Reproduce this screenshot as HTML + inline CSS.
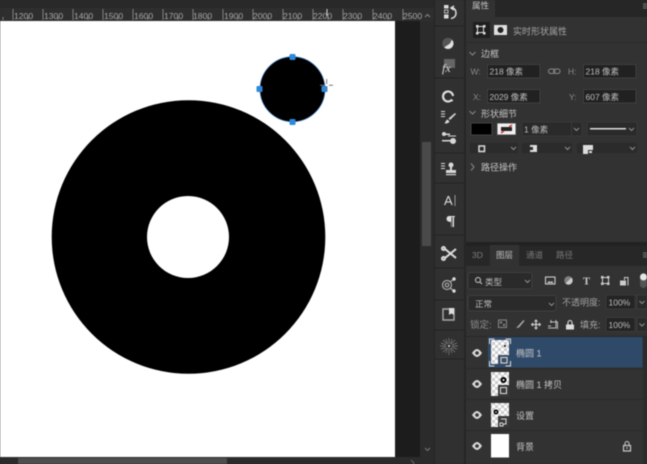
<!DOCTYPE html>
<html><head><meta charset="utf-8"><style>
html,body{margin:0;padding:0;background:#2a2a2a;width:647px;height:464px;overflow:hidden}
svg{display:block;filter:blur(.45px)}
text{font-family:"Liberation Sans","Noto Sans CJK SC",sans-serif;fill:#b4b4b4;font-size:9px}
.r{font-size:8.6px;fill:#a8a8a8}
.l{fill:#bcbcbc;font-size:8.5px}
.t{fill:#c4c4c4;font-size:9px}
.i{fill:#212121;stroke:#3f3f3f;stroke-width:1}
.d{fill:none;stroke:#8f8f8f;stroke-width:1}
.e{fill:#d8d8d8}
</style></head><body>
<svg width="647" height="464" viewBox="0 0 647 464" xmlns="http://www.w3.org/2000/svg">
<defs><pattern id="ck" width="6" height="6" patternUnits="userSpaceOnUse"><rect width="6" height="6" fill="#fff"/><rect width="3" height="3" fill="#ccc"/><rect x="3" y="3" width="3" height="3" fill="#ccc"/></pattern></defs>
<rect width="647" height="464" fill="#2a2a2a"/>
<!-- ruler -->
<rect width="435" height="21" fill="#2e2e2e"/>
<rect y="0" width="435" height="8" fill="#292929"/>
<g stroke="#808080" stroke-width="1">
<path d="M13 9V20M43 9V20M73 9V20M103 9V20M133 9V20M163 9V20M193 9V20M223 9V20M253 9V20M283 9V20M313 9V20M343 9V20M373 9V20M403 9V20"/>
<path d="M3 17V20M28 17V20M58 17V20M88 17V20M118 17V20M148 17V20M178 17V20M208 17V20M238 17V20M268 17V20M298 17V20M328 17V20M358 17V20M388 17V20"/>
<path d="M327 9V16" stroke="#ddd"/>
</g>
<text class="r" x="14" y="19">1200</text><text class="r" x="44" y="19">1300</text><text class="r" x="74" y="19">1400</text><text class="r" x="104" y="19">1500</text><text class="r" x="134" y="19">1600</text><text class="r" x="164" y="19">1700</text><text class="r" x="193" y="19">1800</text><text class="r" x="224" y="19">1900</text><text class="r" x="253" y="19">2000</text><text class="r" x="283" y="19">2100</text><text class="r" x="313" y="19">2200</text><text class="r" x="343" y="19">2300</text><text class="r" x="373" y="19">2400</text><text class="r" x="403" y="19">2500</text>
<path d="M425 17l2.500-2.500 2.500 2.500" fill="none" stroke="#888"/>
<!-- canvas -->
<rect x="0" y="21" width="395" height="436" fill="#fff"/>
<rect x="395" y="21" width="25" height="443" fill="#1c1c1c"/>
<rect x="420" y="21" width="15" height="443" fill="#2b2b2b"/>
<rect x="422" y="142" width="9" height="104" fill="#4a4a4a"/>
<path d="M425 448l2.500 2.500 2.500-2.500" fill="none" stroke="#777"/>
<rect x="0" y="457" width="420" height="7" fill="#2b2b2b"/>
<rect x="18" y="458" width="209" height="6" fill="#4e4e4e"/>
<path d="M411 460l3 3-3 3" fill="none" stroke="#666"/>
<!-- artwork -->
<circle cx="188.500" cy="237" r="136.800" fill="#000"/>
<circle cx="188" cy="237" r="41" fill="#fff"/>
<circle cx="292.500" cy="89.200" r="32.500" fill="#000"/>
<circle cx="292.500" cy="89.200" r="32.500" fill="none" stroke="#2b7fd0" stroke-width=".8" opacity=".7"/>
<g fill="#2e88dc"><rect x="289.500" y="54" width="6" height="6" rx="1"/><rect x="289.500" y="119" width="6" height="6" rx="1"/><rect x="256.500" y="86" width="6" height="6" rx="1"/><rect x="321.500" y="86" width="6" height="6" rx="1"/></g>
<path d="M326.700 79v5M326.700 87v3M320 85.300h5M329 85.300h4" stroke="#777" stroke-width="1" fill="none"/>
<!-- dock -->
<rect x="435" y="0" width="30" height="464" fill="#303030"/>
<rect x="434" y="0" width="1" height="464" fill="#232323"/>
<rect x="464" y="0" width="2" height="464" fill="#262626"/>
<g stroke="#242424"><path d="M435 26H464M435 78H464M435 153H464M435 183H464M435 235H464M435 268H464M435 300H464M435 330H464M435 359H464"/></g>
<!-- dock icons -->
<g fill="#dcdcdc">
<rect x="444" y="5" width="4.500" height="3.500"/><rect x="444.500" y="10" width="3.500" height="3" fill="none" stroke="#ddd" stroke-width=".8"/><rect x="444" y="14.500" width="4.500" height="4"/>
</g>
<path d="M454 6l-3 2 3 2M451.500 8c3 0 4.500 2 4.500 5s-2 5-5 5.500" fill="none" stroke="#ddd" stroke-width="1.500"/>
<circle cx="448" cy="43.500" r="5.500" fill="#e2e2e2"/>
<path d="M444 47.500a5.500 5.500 0 0 1 8-8l-2 4z" fill="#555"/>
<rect x="444" y="59" width="11" height="9" fill="#666"/>
<text x="442" y="72" style="font:italic 12px 'Liberation Serif',serif;fill:#ddd">fx</text>
<path d="M452 99.500a5 5 0 1 1 1-3.500" fill="none" stroke="#ddd" stroke-width="2.200"/>
<circle cx="452" cy="100.500" r="1" fill="#ddd"/>
<g fill="#d8d8d8">
<path d="M441 111h4v1h-4zM441 113.500h4v1h-4zM441 116h4v1h-4z"/>
<path d="M455 113l1 1-6 6-1.500-1.500zM447.500 119.500l2 2c-1 2-3 2-5 2 1-1 1-3 3-4z"/>
<path d="M442 133.500h8v1.500h-8zM448 135.500h8v1h-8z"/><circle cx="444" cy="134" r="2"/>
<path d="M442 140h9v1.500h-9z"/><circle cx="453" cy="141" r="3"/>
<path d="M441 163h4v1h-4zM441 165.500h4v1h-4zM441 168h4v1h-4z"/>
<circle cx="451" cy="165" r="2.500"/><path d="M450 167h2v3h4v3h-10v-3h4z"/><rect x="446" y="174" width="10" height="1.200"/>
</g>
<text x="444" y="205" style="font-size:13px;fill:#ddd">A</text><rect x="454.500" y="195" width="1" height="11" fill="#999"/>
<path d="M449 216h6v1h-1v10h-1.500v-10h-1v10H451v-5c-3 0-4.500-1.500-4.500-3s1-3 2.500-3z" fill="#ddd"/>
<g stroke="#dcdcdc" fill="none" stroke-width="2"><path d="M445 249l11 9M445 258l11-9"/><circle cx="443.500" cy="248.500" r="1.500"/><circle cx="443.500" cy="258.500" r="1.500"/></g>
<g stroke="#aaa" fill="none" stroke-width="1.200"><circle cx="447" cy="285" r="4.500"/><circle cx="447" cy="285" r="1.800"/><path d="M454 279l-4 3M454 291l-4-3"/></g>
<circle cx="454" cy="279" r="1.700" fill="#ddd"/><circle cx="454" cy="291" r="1.700" fill="#ddd"/>
<path d="M443 309h11v11h-11z" fill="none" stroke="#aaa" stroke-width="1.400"/><path d="M449 308h5v7l-2.500-1.500L449 315z" fill="#ddd"/>
<g stroke="#808080" stroke-width=".7"><path d="M449 338v6M449 348v7M440 346h6M452 346h6M443 340l4 4M451 348l4 4M455 340l-4 4M447 348l-4 4M446 339l1.500 5M452 339l-1.500 5M446 353l1.500-5M452 353l-1.500-5M441 343l5 2M457 343l-5 2M441 349l5-2M457 349l-5-2"/></g>
<circle cx="449" cy="346" r="1" fill="#ddd"/>
<!-- properties panel -->
<rect x="466" y="0" width="181" height="242" fill="#323232"/>
<rect x="466" y="0" width="181" height="17" fill="#262626"/>
<rect x="466" y="0" width="29" height="17" fill="#323232"/>
<text x="472" y="8.500" class="t" style="font-size:8.500px">属性</text>
<path d="M643 4h4M643 6h4M643 8h4" stroke="#777"/>
<rect x="473" y="22" width="17" height="16" fill="#1f1f1f"/>
<path d="M477.500 26.500h6v6h-6z" fill="none" stroke="#ddd"/><path d="M476 25h2.500v2.500H476zM483 25h2.500v2.500H483zM476 32h2.500v2.500H476zM483 32h2.500v2.500H483z" fill="#ddd"/>
<rect x="494" y="25" width="13" height="10" fill="#e0e0e0"/><circle cx="500.500" cy="30" r="3" fill="#222"/>
<text x="513" y="34.500" style="font-size:9px;fill:#a5a5a5">实时形状属性</text>
<rect x="466" y="42" width="181" height="1" fill="#2b2b2b"/>
<path d="M469.500 52l3 3 3-3" fill="none" stroke="#888"/>
<text x="481" y="57" class="t">边框</text>
<text x="470.500" y="74.500" style="font-size:8.500px;fill:#8a8a8a">W:</text>
<rect x="487.500" y="64.500" width="52.500" height="13.500" class="i"/>
<text x="489.500" y="74.500" class="l">218 像素</text>
<rect x="548.500" y="69" width="6.500" height="4.500" rx="2.200" fill="none" stroke="#8a8a8a"/><rect x="553.500" y="69" width="6.500" height="4.500" rx="2.200" fill="none" stroke="#8a8a8a"/>
<text x="568" y="74.500" style="font-size:8.500px;fill:#8a8a8a">H:</text>
<rect x="583.500" y="64.500" width="52.500" height="13.500" class="i"/>
<text x="585.500" y="74.500" class="l">218 像素</text>
<text x="473" y="100" style="font-size:8.500px;fill:#8a8a8a">X:</text>
<rect x="487.500" y="89.500" width="52.500" height="13.500" class="i"/>
<text x="489.500" y="100" class="l">2029 像素</text>
<text x="569" y="100" style="font-size:8.500px;fill:#8a8a8a">Y:</text>
<rect x="583.500" y="89.500" width="52.500" height="13.500" class="i"/>
<text x="585.500" y="100" class="l">607 像素</text>
<path d="M469.500 111l3 3 3-3" fill="none" stroke="#888"/>
<text x="481" y="117" class="t">形状细节</text>
<rect x="471" y="123" width="21" height="12" fill="#000" stroke="#444"/>
<rect x="497" y="123" width="19" height="12" fill="#f0f0f0" stroke="#444"/>
<rect x="501" y="127" width="11" height="4" fill="#222"/><path d="M501 133l3-2M509 127l3-2" stroke="#d33" stroke-width="1.500"/>
<rect x="522" y="122" width="60" height="14" fill="#2a2a2a" stroke="#383838"/>
<rect x="571" y="122" width="1" height="14" fill="#3a3a3a"/>
<text x="524" y="132.500" class="l">1 像素</text>
<path d="M574 128l2.500 2.500 2.500-2.500" class="d"/>
<rect x="587" y="122" width="50" height="14" fill="#2a2a2a" stroke="#383838"/>
<rect x="590" y="128" width="36" height="1.500" fill="#ddd"/>
<path d="M629 128l2.500 2.500 2.500-2.500" class="d"/>
<rect x="470" y="143" width="48" height="10" fill="#2b2b2b"/><rect x="522" y="143" width="50" height="10" fill="#2b2b2b"/><rect x="577" y="143" width="60" height="10" fill="#2b2b2b"/>
<rect x="479" y="146" width="5.500" height="5.500" fill="none" stroke="#ddd" stroke-width="1.500"/>
<path d="M511 147l2.500 2.500 2.500-2.500M565 147l2.500 2.500 2.500-2.500M630 147l2.500 2.500 2.500-2.500" class="d"/>
<path d="M530 145h7v7h-7v-2h3v-3h-3z" fill="#ddd"/>
<path d="M583 145h10v5h-5v4h-5zM589 151h3v2h-3z" fill="#ddd"/>
<path d="M471 163.500l3 3.500-3 3.500" fill="none" stroke="#888"/>
<text x="481" y="170.500" class="t">路径操作</text>
<!-- layers tabs -->
<rect x="466" y="242" width="181" height="222" fill="#323232"/>
<rect x="466" y="242" width="181" height="4" fill="#222"/>
<rect x="466" y="246" width="181" height="20" fill="#272727"/>
<rect x="490" y="245" width="29" height="21" fill="#323232"/>
<text x="472" y="258" style="font-size:8.500px;fill:#7e7e7e">3D</text>
<text x="496" y="258" style="font-size:8.500px;fill:#c0c0c0">图层</text>
<text x="526" y="258" style="font-size:8.500px;fill:#777">通道</text>
<text x="556" y="258" style="font-size:8.500px;fill:#777">路径</text>
<path d="M643 253h4M643 255h4M643 257h4" stroke="#777"/>
<!-- filter row -->
<rect x="468" y="272.500" width="64" height="16.500" rx="2" fill="#2a2a2a" stroke="#3f3f3f"/>
<circle cx="478" cy="280" r="2.500" fill="none" stroke="#ccc"/><path d="M480 282l2 2" stroke="#ccc"/>
<text x="485" y="285" class="l">类型</text>
<path d="M525 280l2.500 2.500 2.500-2.500" class="d"/>
<rect x="545.500" y="277" width="9.500" height="7" fill="none" stroke="#ccc" stroke-width="1.100"/><path d="M547 283l2-2 1.500 1 1.500-1 1.500 2z" fill="#ccc"/>
<circle cx="568.500" cy="280.500" r="4.200" fill="#ccc"/><path d="M565.500 283.500a4.200 4.200 0 0 1 6-6z" fill="#333" opacity=".5"/>
<text x="583" y="284.500" style="font:bold 10.500px 'Liberation Serif',serif;fill:#ccc">T</text>
<path d="M602.500 277.500h6v6h-6z" fill="none" stroke="#ccc"/><path d="M601 276h2.500v2.500H601zM607 276h2.500v2.500H607zM601 282.500h2.500v2.500H601zM607 282.500h2.500v2.500H607z" fill="#ccc"/>
<path d="M620 280.500h6v5h-6z" fill="#ccc"/><path d="M624.500 280v-2.500h3.500v8" fill="none" stroke="#ccc"/>
<rect x="640" y="273" width="7" height="15" rx="3.500" fill="#555"/><circle cx="643.500" cy="277" r="3.500" fill="#e6e6e6"/>
<!-- blend row -->
<rect x="468" y="295.500" width="88" height="15.500" rx="2" fill="#2a2a2a" stroke="#3f3f3f"/>
<text x="475" y="307" class="l">正常</text>
<path d="M549 303l2.500 2.500 2.500-2.500" class="d"/>
<text x="562" y="305.500" style="font-size:9px;fill:#a0a0a0">不透明度:</text>
<rect x="606" y="295" width="29" height="14" fill="#242424" stroke="#3a3a3a"/>
<text x="608.500" y="305.500" class="l">100%</text>
<rect x="637" y="295" width="10" height="14" fill="#2a2a2a" stroke="#3a3a3a"/>
<path d="M639.500 301l2.500 2.500 2.500-2.500" class="d"/>
<!-- lock row -->
<text x="470" y="328" style="font-size:9.500px;fill:#8c8c8c">锁定:</text>
<rect x="498.500" y="320" width="8" height="7.500" fill="none" stroke="#888"/><rect x="500" y="321.500" width="2" height="2" fill="#888"/><rect x="503" y="324" width="2" height="2" fill="#888"/>
<path d="M523.500 320l-5 5.500-2.500 2.500 3-.5 5.500-6.500z" fill="#aaa"/>
<path d="M536 320v9M531.500 324.500h9" stroke="#ccc" stroke-width="1.300"/><path d="M534.500 321.500l1.500-1.500 1.500 1.500M534.500 327.500l1.500 1.500 1.500-1.500M533 323l-1.500 1.500 1.500 1.500M539 323l1.500 1.500-1.500 1.500" fill="none" stroke="#ccc"/>
<path d="M550 322h7.500v7M548 328h8v-8M551 320v3M548 326h3" fill="none" stroke="#bbb"/>
<path d="M566 324.500h8v5h-8z" fill="#ddd"/><path d="M568 324.500v-2a2 2 0 0 1 4 0v2" fill="none" stroke="#ddd" stroke-width="1.100"/>
<text x="580" y="328" style="font-size:9px;fill:#a8a8a8">填充:</text>
<rect x="606" y="317.500" width="29" height="14" fill="#242424" stroke="#3a3a3a"/>
<text x="608.500" y="328" class="l">100%</text>
<rect x="637" y="317.500" width="10" height="14" fill="#2a2a2a" stroke="#3a3a3a"/>
<path d="M639.500 323.500l2.500 2.500 2.500-2.500" class="d"/>
<!-- layers -->
<rect x="466" y="336" width="181" height="1" fill="#272727"/>
<rect x="488" y="337" width="154.500" height="30.500" fill="#2f4a69"/>
<g fill="#2a2a2a"><rect x="466" y="368" width="177" height="1"/><rect x="466" y="399" width="177" height="1"/><rect x="466" y="430" width="177" height="1"/></g>
<rect x="643" y="337" width="4" height="127" fill="#2c2c2c"/>
<g>
<path d="M472 353c2-3 4-4 5-4s3 1 5 4c-2 3-4 4-5 4s-3-1-5-4z" class="e"/><circle cx="477" cy="353" r="1.800" fill="#333"/>
<path d="M472 384c2-3 4-4 5-4s3 1 5 4c-2 3-4 4-5 4s-3-1-5-4z" class="e"/><circle cx="477" cy="384" r="1.800" fill="#333"/>
<path d="M472 415c2-3 4-4 5-4s3 1 5 4c-2 3-4 4-5 4s-3-1-5-4z" class="e"/><circle cx="477" cy="415" r="1.800" fill="#333"/>
<path d="M472 446c2-3 4-4 5-4s3 1 5 4c-2 3-4 4-5 4s-3-1-5-4z" class="e"/><circle cx="477" cy="446" r="1.800" fill="#333"/>
</g>
<rect x="491" y="340" width="18" height="24" fill="url(#ck)"/>
<path d="M489.500 344v-5h5M505.500 339h5v5M489.500 361v5h5M505.500 366h5v-5" fill="none" stroke="#dfdfdf"/>
<circle cx="505" cy="346" r="1" fill="#000"/>
<rect x="498" y="355" width="11" height="10" fill="#3a4f68"/><rect x="501" y="357.500" width="6" height="5.500" fill="none" stroke="#ddd"/>
<text x="516" y="356.500" class="t">椭圆 1</text>
<rect x="491" y="372" width="18" height="24" fill="url(#ck)"/>
<circle cx="503.500" cy="380" r="3" fill="#000"/><circle cx="503.500" cy="380" r="1" fill="#fff"/>
<rect x="498" y="385" width="11" height="11" fill="#3a3a3a"/><rect x="500.500" y="387.500" width="6" height="6" fill="none" stroke="#ddd"/>
<text x="516" y="388" class="t">椭圆 1 拷贝</text>
<rect x="491" y="403" width="18" height="24" fill="url(#ck)"/>
<circle cx="496" cy="412" r="2.500" fill="#000"/><circle cx="496" cy="412" r=".8" fill="#fff"/>
<rect x="498" y="416" width="11" height="11" fill="#3a3a3a"/><path d="M501 419h5v5h-3v2h-3v-3h3" fill="none" stroke="#ddd"/>
<text x="516" y="419" class="t">设置</text>
<rect x="491" y="434" width="18" height="23.500" fill="#fff"/>
<text x="516" y="450" class="t">背景</text>
<path d="M623.500 445.500h7v5.500h-7z" fill="none" stroke="#c8c8c8" stroke-width="1.200"/><path d="M625 445.500v-2a2 2 0 0 1 4 0v2" fill="none" stroke="#c8c8c8"/><rect x="626.500" y="447" width="1" height="2" fill="#c8c8c8"/>
</svg>
</body></html>
